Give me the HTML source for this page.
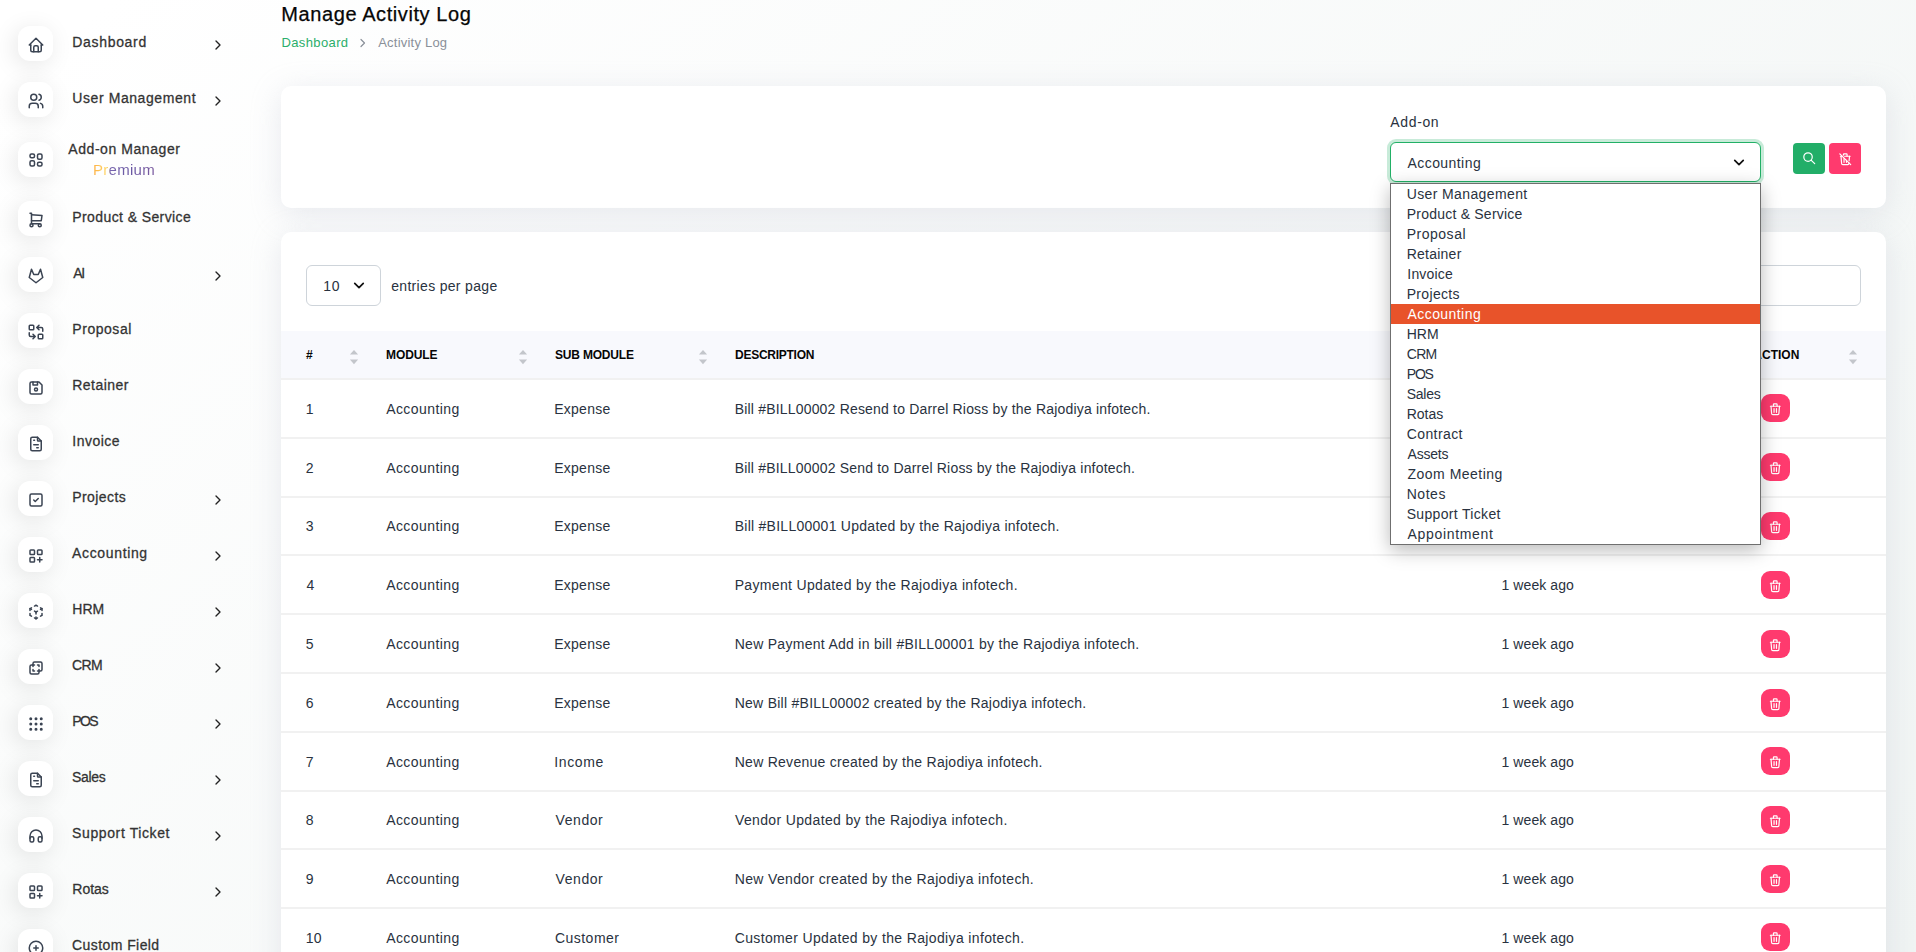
<!DOCTYPE html>
<html lang="en"><head><meta charset="utf-8"><title>Manage Activity Log</title>
<style>
*{box-sizing:border-box;margin:0;padding:0}
html,body{width:1916px;height:952px;overflow:hidden}
body{font-family:"Liberation Sans",sans-serif;color:#293240;position:relative;
background:linear-gradient(141.55deg,rgba(240,244,243,0) 3.46%,#f0f4f3 99.86%),#fff;}
.t{position:absolute;white-space:nowrap;display:block}
.ic{position:absolute;display:block}
.abs{position:absolute}
.micon{position:absolute;left:18px;width:35px;height:35px;border-radius:12px;background:#fff;box-shadow:-3px 4px 23px rgba(0,0,0,.1)}
.card{position:absolute;background:#fff;border-radius:10px;box-shadow:0 6px 30px rgba(182,186,203,.3)}
.rowline{position:absolute;left:281px;width:1605px;height:2px;background:#f1f1f1}
.delbtn{position:absolute;left:1761.3px;width:28.6px;height:28px;border-radius:9px;background:#ff3a6e}
.opt{position:absolute;left:1391px;width:368.7px;height:20px}
</style></head><body>
<nav>
<div class="micon" style="top:26.0px"></div>
<svg class="ic" style="left:26.6px;top:35.6px;" width="18" height="18" viewBox="0 0 24 24" fill="none" stroke="#3b4453" stroke-width="2" stroke-linecap="round" stroke-linejoin="round"><path d="M5 12l-2 0l9 -9l9 9l-2 0"/><path d="M5 12v7a2 2 0 0 0 2 2h10a2 2 0 0 0 2 -2v-7"/><path d="M9 21v-6a2 2 0 0 1 2 -2h2a2 2 0 0 1 2 2v6"/></svg>
<span id="t1" class="t " style="left:72.30px;top:34px;font-size:14px;line-height:17px;color:#333;letter-spacing:0.674px;-webkit-text-stroke:.28px #333;">Dashboard</span>
<svg class="ic" style="left:209.85px;top:36.95px" width="16" height="16" viewBox="0 0 24 24" fill="none" stroke="#222" stroke-width="2" stroke-linecap="round" stroke-linejoin="round"><path d="M9 18l6 -6l-6 -6"/></svg>
<div class="micon" style="top:82.0px"></div>
<svg class="ic" style="left:26.6px;top:91.6px;" width="18" height="18" viewBox="0 0 24 24" fill="none" stroke="#3b4453" stroke-width="2" stroke-linecap="round" stroke-linejoin="round"><path d="M9 7m-4 0a4 4 0 1 0 8 0a4 4 0 1 0 -8 0"/><path d="M3 21v-2a4 4 0 0 1 4 -4h4a4 4 0 0 1 4 4v2"/><path d="M16 3.13a4 4 0 0 1 0 7.75"/><path d="M21 21v-2a4 4 0 0 0 -3 -3.85"/></svg>
<span id="t2" class="t " style="left:72.30px;top:90px;font-size:14px;line-height:17px;color:#333;letter-spacing:0.579px;-webkit-text-stroke:.28px #333;">User Management</span>
<svg class="ic" style="left:209.85px;top:92.95px" width="16" height="16" viewBox="0 0 24 24" fill="none" stroke="#222" stroke-width="2" stroke-linecap="round" stroke-linejoin="round"><path d="M9 18l6 -6l-6 -6"/></svg>
<div class="micon" style="top:142.0px"></div>
<svg class="ic" style="left:26.6px;top:151.0px;" width="18" height="18" viewBox="0 0 24 24" fill="none" stroke="#3b4453" stroke-width="2" stroke-linecap="round" stroke-linejoin="round"><path d="M4 4m0 2a2 2 0 0 1 2 -2h2a2 2 0 0 1 2 2v1a2 2 0 0 1 -2 2h-2a2 2 0 0 1 -2 -2z"/><path d="M4 13m0 2a2 2 0 0 1 2 -2h2a2 2 0 0 1 2 2v3a2 2 0 0 1 -2 2h-2a2 2 0 0 1 -2 -2z"/><path d="M14 4m0 2a2 2 0 0 1 2 -2h2a2 2 0 0 1 2 2v3a2 2 0 0 1 -2 2h-2a2 2 0 0 1 -2 -2z"/><path d="M14 15m0 2a2 2 0 0 1 2 -2h2a2 2 0 0 1 2 2v1a2 2 0 0 1 -2 2h-2a2 2 0 0 1 -2 -2z"/></svg>
<span id="t3" class="t " style="left:68.30px;top:141px;font-size:14px;line-height:17px;color:#333;letter-spacing:0.562px;-webkit-text-stroke:.28px #333;">Add-on Manager</span>
<span id="t4" class="t " style="left:92.90px;top:161px;font-size:15px;line-height:18px;color:#7b6bb0;letter-spacing:0.300px;background:linear-gradient(90deg,#fdb044 0%,#ffd868 23%,#7765ad 28%,#6b59a4 60%,#7a5a9f 100%);-webkit-background-clip:text;background-clip:text;color:transparent;">Premium</span>
<div class="micon" style="top:201.0px"></div>
<svg class="ic" style="left:26.6px;top:210.6px;" width="18" height="18" viewBox="0 0 24 24" fill="none" stroke="#3b4453" stroke-width="2" stroke-linecap="round" stroke-linejoin="round"><path d="M6 19m-2 0a2 2 0 1 0 4 0a2 2 0 1 0 -4 0"/><path d="M17 19m-2 0a2 2 0 1 0 4 0a2 2 0 1 0 -4 0"/><path d="M17 17h-11v-14h-2"/><path d="M6 5l14 1l-1 7h-13"/></svg>
<span id="t5" class="t " style="left:72.30px;top:209px;font-size:14px;line-height:17px;color:#333;letter-spacing:0.399px;-webkit-text-stroke:.28px #333;">Product &amp; Service</span>
<div class="micon" style="top:257.0px"></div>
<svg class="ic" style="left:26.6px;top:266.6px;" width="18" height="18" viewBox="0 0 24 24" fill="none" stroke="#3b4453" stroke-width="2" stroke-linecap="round" stroke-linejoin="round"><path d="M21 14l-9 7l-9 -7l3 -11l3 7h6l3 -7z"/></svg>
<span id="t6" class="t " style="left:73.30px;top:265px;font-size:14px;line-height:17px;color:#333;letter-spacing:-1.400px;-webkit-text-stroke:.28px #333;">AI</span>
<svg class="ic" style="left:209.85px;top:267.95px" width="16" height="16" viewBox="0 0 24 24" fill="none" stroke="#222" stroke-width="2" stroke-linecap="round" stroke-linejoin="round"><path d="M9 18l6 -6l-6 -6"/></svg>
<div class="micon" style="top:313.0px"></div>
<svg class="ic" style="left:26.6px;top:322.6px;" width="18" height="18" viewBox="0 0 24 24" fill="none" stroke="#3b4453" stroke-width="2" stroke-linecap="round" stroke-linejoin="round"><path d="M3 3m0 1a1 1 0 0 1 1 -1h4a1 1 0 0 1 1 1v4a1 1 0 0 1 -1 1h-4a1 1 0 0 1 -1 -1z"/><path d="M15 15m0 1a1 1 0 0 1 1 -1h4a1 1 0 0 1 1 1v4a1 1 0 0 1 -1 1h-4a1 1 0 0 1 -1 -1z"/><path d="M21 11v-3a2 2 0 0 0 -2 -2h-6l3 3m0 -6l-3 3"/><path d="M3 13v3a2 2 0 0 0 2 2h6l-3 -3m0 6l3 -3"/></svg>
<span id="t7" class="t " style="left:72.30px;top:321px;font-size:14px;line-height:17px;color:#333;letter-spacing:0.543px;-webkit-text-stroke:.28px #333;">Proposal</span>
<div class="micon" style="top:369.0px"></div>
<svg class="ic" style="left:26.6px;top:378.6px;" width="18" height="18" viewBox="0 0 24 24" fill="none" stroke="#3b4453" stroke-width="2" stroke-linecap="round" stroke-linejoin="round"><path d="M6 4h10l4 4v10a2 2 0 0 1 -2 2h-12a2 2 0 0 1 -2 -2v-12a2 2 0 0 1 2 -2"/><path d="M12 14m-2 0a2 2 0 1 0 4 0a2 2 0 1 0 -4 0"/><path d="M14 4l0 4l-6 0l0 -4"/></svg>
<span id="t8" class="t " style="left:72.30px;top:377px;font-size:14px;line-height:17px;color:#333;letter-spacing:0.443px;-webkit-text-stroke:.28px #333;">Retainer</span>
<div class="micon" style="top:425.0px"></div>
<svg class="ic" style="left:26.6px;top:434.6px;" width="18" height="18" viewBox="0 0 24 24" fill="none" stroke="#3b4453" stroke-width="2" stroke-linecap="round" stroke-linejoin="round"><path d="M14 3v4a1 1 0 0 0 1 1h4"/><path d="M17 21h-10a2 2 0 0 1 -2 -2v-14a2 2 0 0 1 2 -2h7l5 5v11a2 2 0 0 1 -2 2z"/><path d="M9 7l1 0"/><path d="M9 13l6 0"/><path d="M13 17l2 0"/></svg>
<span id="t9" class="t " style="left:72.30px;top:433px;font-size:14px;line-height:17px;color:#333;letter-spacing:0.500px;-webkit-text-stroke:.28px #333;">Invoice</span>
<div class="micon" style="top:481.0px"></div>
<svg class="ic" style="left:26.6px;top:490.6px;" width="18" height="18" viewBox="0 0 24 24" fill="none" stroke="#3b4453" stroke-width="2" stroke-linecap="round" stroke-linejoin="round"><path d="M4 4m0 2a2 2 0 0 1 2 -2h12a2 2 0 0 1 2 2v12a2 2 0 0 1 -2 2h-12a2 2 0 0 1 -2 -2z"/><path d="M9 12l2 2l4 -4"/></svg>
<span id="t10" class="t " style="left:72.30px;top:489px;font-size:14px;line-height:17px;color:#333;letter-spacing:0.400px;-webkit-text-stroke:.28px #333;">Projects</span>
<svg class="ic" style="left:209.85px;top:491.95px" width="16" height="16" viewBox="0 0 24 24" fill="none" stroke="#222" stroke-width="2" stroke-linecap="round" stroke-linejoin="round"><path d="M9 18l6 -6l-6 -6"/></svg>
<div class="micon" style="top:537.0px"></div>
<svg class="ic" style="left:26.6px;top:546.6px;" width="18" height="18" viewBox="0 0 24 24" fill="none" stroke="#3b4453" stroke-width="2" stroke-linecap="round" stroke-linejoin="round"><path d="M4 4m0 1a1 1 0 0 1 1 -1h4a1 1 0 0 1 1 1v4a1 1 0 0 1 -1 1h-4a1 1 0 0 1 -1 -1z"/><path d="M14 4m0 1a1 1 0 0 1 1 -1h4a1 1 0 0 1 1 1v4a1 1 0 0 1 -1 1h-4a1 1 0 0 1 -1 -1z"/><path d="M4 14m0 1a1 1 0 0 1 1 -1h4a1 1 0 0 1 1 1v4a1 1 0 0 1 -1 1h-4a1 1 0 0 1 -1 -1z"/><path d="M14 17h6m-3 -3v6"/></svg>
<span id="t11" class="t " style="left:72.10px;top:545px;font-size:14px;line-height:17px;color:#333;letter-spacing:0.644px;-webkit-text-stroke:.28px #333;">Accounting</span>
<svg class="ic" style="left:209.85px;top:547.95px" width="16" height="16" viewBox="0 0 24 24" fill="none" stroke="#222" stroke-width="2" stroke-linecap="round" stroke-linejoin="round"><path d="M9 18l6 -6l-6 -6"/></svg>
<div class="micon" style="top:593.0px"></div>
<svg class="ic" style="left:26.6px;top:602.6px;" width="18" height="18" viewBox="0 0 24 24" fill="none" stroke="#3b4453" stroke-width="2" stroke-linecap="round" stroke-linejoin="round"><path d="M6 17.6l-2 -1.1v-2.5"/><path d="M4 10v-2.5l2 -1.1"/><path d="M10 4.1l2 -1.1l2 1.1"/><path d="M18 6.4l2 1.1v2.5"/><path d="M20 14v2.5l-2 1.12"/><path d="M14 19.9l-2 1.1l-2 -1.1"/><path d="M12 12l2 -1.1"/><path d="M18 8.6l2 -1.1"/><path d="M12 12l0 2.5"/><path d="M12 18.5l0 2.5"/><path d="M12 12l-2 -1.12"/><path d="M6 8.6l-2 -1.1"/></svg>
<span id="t12" class="t " style="left:72.30px;top:601px;font-size:14px;line-height:17px;color:#333;-webkit-text-stroke:.28px #333;">HRM</span>
<svg class="ic" style="left:209.85px;top:603.95px" width="16" height="16" viewBox="0 0 24 24" fill="none" stroke="#222" stroke-width="2" stroke-linecap="round" stroke-linejoin="round"><path d="M9 18l6 -6l-6 -6"/></svg>
<div class="micon" style="top:649.0px"></div>
<svg class="ic" style="left:26.6px;top:658.6px;" width="18" height="18" viewBox="0 0 24 24" fill="none" stroke="#3b4453" stroke-width="2" stroke-linecap="round" stroke-linejoin="round"><path d="M16 16v2a2 2 0 0 1 -2 2h-8a2 2 0 0 1 -2 -2v-8a2 2 0 0 1 2 -2h2v-2a2 2 0 0 1 2 -2h8a2 2 0 0 1 2 2v8a2 2 0 0 1 -2 2h-2"/><path d="M10 8l-2 0l0 2"/><path d="M8 14l0 2l2 0"/><path d="M14 8l2 0l0 2"/><path d="M16 14l0 2l-2 0"/></svg>
<span id="t13" class="t " style="left:72.10px;top:657px;font-size:14px;line-height:17px;color:#333;letter-spacing:-0.700px;-webkit-text-stroke:.28px #333;">CRM</span>
<svg class="ic" style="left:209.85px;top:659.95px" width="16" height="16" viewBox="0 0 24 24" fill="none" stroke="#222" stroke-width="2" stroke-linecap="round" stroke-linejoin="round"><path d="M9 18l6 -6l-6 -6"/></svg>
<div class="micon" style="top:705.0px"></div>
<svg class="ic" style="left:26.6px;top:714.6px;" width="18" height="18" viewBox="0 0 24 24" fill="none" stroke="#3b4453" stroke-width="2" stroke-linecap="round" stroke-linejoin="round"><path d="M5 5m-1 0a1 1 0 1 0 2 0a1 1 0 1 0 -2 0"/><path d="M12 5m-1 0a1 1 0 1 0 2 0a1 1 0 1 0 -2 0"/><path d="M19 5m-1 0a1 1 0 1 0 2 0a1 1 0 1 0 -2 0"/><path d="M5 12m-1 0a1 1 0 1 0 2 0a1 1 0 1 0 -2 0"/><path d="M12 12m-1 0a1 1 0 1 0 2 0a1 1 0 1 0 -2 0"/><path d="M19 12m-1 0a1 1 0 1 0 2 0a1 1 0 1 0 -2 0"/><path d="M5 19m-1 0a1 1 0 1 0 2 0a1 1 0 1 0 -2 0"/><path d="M12 19m-1 0a1 1 0 1 0 2 0a1 1 0 1 0 -2 0"/><path d="M19 19m-1 0a1 1 0 1 0 2 0a1 1 0 1 0 -2 0"/></svg>
<span id="t14" class="t " style="left:72.30px;top:713px;font-size:14px;line-height:17px;color:#333;letter-spacing:-1.600px;-webkit-text-stroke:.28px #333;">POS</span>
<svg class="ic" style="left:209.85px;top:715.95px" width="16" height="16" viewBox="0 0 24 24" fill="none" stroke="#222" stroke-width="2" stroke-linecap="round" stroke-linejoin="round"><path d="M9 18l6 -6l-6 -6"/></svg>
<div class="micon" style="top:761.0px"></div>
<svg class="ic" style="left:26.6px;top:770.6px;" width="18" height="18" viewBox="0 0 24 24" fill="none" stroke="#3b4453" stroke-width="2" stroke-linecap="round" stroke-linejoin="round"><path d="M14 3v4a1 1 0 0 0 1 1h4"/><path d="M17 21h-10a2 2 0 0 1 -2 -2v-14a2 2 0 0 1 2 -2h7l5 5v11a2 2 0 0 1 -2 2z"/><path d="M9 7l1 0"/><path d="M9 13l6 0"/><path d="M13 17l2 0"/></svg>
<span id="t15" class="t " style="left:72.10px;top:769px;font-size:14px;line-height:17px;color:#333;letter-spacing:-0.350px;-webkit-text-stroke:.28px #333;">Sales</span>
<svg class="ic" style="left:209.85px;top:771.95px" width="16" height="16" viewBox="0 0 24 24" fill="none" stroke="#222" stroke-width="2" stroke-linecap="round" stroke-linejoin="round"><path d="M9 18l6 -6l-6 -6"/></svg>
<div class="micon" style="top:817.0px"></div>
<svg class="ic" style="left:26.6px;top:826.6px;" width="18" height="18" viewBox="0 0 24 24" fill="none" stroke="#3b4453" stroke-width="2" stroke-linecap="round" stroke-linejoin="round"><path d="M4 13m0 2a2 2 0 0 1 2 -2h1a2 2 0 0 1 2 2v3a2 2 0 0 1 -2 2h-1a2 2 0 0 1 -2 -2z"/><path d="M15 13m0 2a2 2 0 0 1 2 -2h1a2 2 0 0 1 2 2v3a2 2 0 0 1 -2 2h-1a2 2 0 0 1 -2 -2z"/><path d="M4 15v-3a8 8 0 0 1 16 0v3"/></svg>
<span id="t16" class="t " style="left:72.10px;top:825px;font-size:14px;line-height:17px;color:#333;letter-spacing:0.608px;-webkit-text-stroke:.28px #333;">Support Ticket</span>
<svg class="ic" style="left:209.85px;top:827.95px" width="16" height="16" viewBox="0 0 24 24" fill="none" stroke="#222" stroke-width="2" stroke-linecap="round" stroke-linejoin="round"><path d="M9 18l6 -6l-6 -6"/></svg>
<div class="micon" style="top:873.0px"></div>
<svg class="ic" style="left:26.6px;top:882.6px;" width="18" height="18" viewBox="0 0 24 24" fill="none" stroke="#3b4453" stroke-width="2" stroke-linecap="round" stroke-linejoin="round"><path d="M4 4m0 1a1 1 0 0 1 1 -1h4a1 1 0 0 1 1 1v4a1 1 0 0 1 -1 1h-4a1 1 0 0 1 -1 -1z"/><path d="M14 4m0 1a1 1 0 0 1 1 -1h4a1 1 0 0 1 1 1v4a1 1 0 0 1 -1 1h-4a1 1 0 0 1 -1 -1z"/><path d="M4 14m0 1a1 1 0 0 1 1 -1h4a1 1 0 0 1 1 1v4a1 1 0 0 1 -1 1h-4a1 1 0 0 1 -1 -1z"/><path d="M14 17h6m-3 -3v6"/></svg>
<span id="t17" class="t " style="left:72.30px;top:881px;font-size:14px;line-height:17px;color:#333;-webkit-text-stroke:.28px #333;">Rotas</span>
<svg class="ic" style="left:209.85px;top:883.95px" width="16" height="16" viewBox="0 0 24 24" fill="none" stroke="#222" stroke-width="2" stroke-linecap="round" stroke-linejoin="round"><path d="M9 18l6 -6l-6 -6"/></svg>
<div class="micon" style="top:929.0px"></div>
<svg class="ic" style="left:26.6px;top:938.6px;" width="18" height="18" viewBox="0 0 24 24" fill="none" stroke="#3b4453" stroke-width="2" stroke-linecap="round" stroke-linejoin="round"><path d="M3 12a9 9 0 1 0 18 0a9 9 0 0 0 -18 0"/><path d="M9 12h6"/><path d="M12 9v6"/></svg>
<span id="t18" class="t " style="left:72.10px;top:937px;font-size:14px;line-height:17px;color:#333;letter-spacing:0.418px;-webkit-text-stroke:.28px #333;">Custom Field</span>
</nav>
<main>
<span id="t19" class="t " style="left:281.30px;top:2px;font-size:20px;line-height:24px;color:#060606;letter-spacing:0.589px;-webkit-text-stroke:.25px #060606;">Manage Activity Log</span>
<span id="t20" class="t " style="left:281.50px;top:35px;font-size:13px;line-height:16px;color:#2bae6a;letter-spacing:0.375px;">Dashboard</span>
<svg class="ic" style="left:357px;top:36.5px" width="12" height="12" viewBox="0 0 12 12" fill="none" stroke="#8a9099" stroke-width="1.2" stroke-linecap="round" stroke-linejoin="round"><path d="M4 2.5l3.5 3.5l-3.5 3.5"/></svg>
<span id="t21" class="t " style="left:378.20px;top:35px;font-size:13px;line-height:16px;color:#8a9099;letter-spacing:0.219px;">Activity Log</span>
<div class="card" style="left:281px;top:86px;width:1605px;height:122px"></div>
<span id="t22" class="t " style="left:1390.30px;top:114px;font-size:14px;line-height:17px;letter-spacing:0.640px;">Add-on</span>
<div class="abs" style="left:1390px;top:141.6px;width:370.7px;height:40.9px;border:1px solid #22b066;border-radius:6px;background:#fff;box-shadow:0 0 0 3px rgba(34,176,102,.25)"></div>
<span id="t23" class="t " style="left:1407.50px;top:155px;font-size:14px;line-height:17px;letter-spacing:0.433px;">Accounting</span>
<svg class="ic" style="left:1731px;top:155px" width="16" height="16" viewBox="0 0 16 16" fill="none" stroke="#111" stroke-width="1.7" stroke-linecap="round" stroke-linejoin="round"><path d="M3.75 5.3l4.25 4.4l4.25 -4.4"/></svg>
<div class="abs" style="left:1793px;top:143px;width:32px;height:31px;border-radius:4px;background:#22ae68"></div>
<svg class="ic" style="left:1801.8px;top:151.4px;" width="14.5" height="14.5" viewBox="0 0 24 24" fill="none" stroke="#fff" stroke-width="2" stroke-linecap="round" stroke-linejoin="round"><path d="M10 10m-7 0a7 7 0 1 0 14 0a7 7 0 1 0 -14 0"/><path d="M21 21l-6 -6"/></svg>
<div class="abs" style="left:1829px;top:143px;width:32px;height:31px;border-radius:4px;background:#ff3a6e"></div>
<svg class="ic" style="left:1837.8px;top:151.7px;" width="14.5" height="14.5" viewBox="0 0 24 24" fill="none" stroke="#fff" stroke-width="2" stroke-linecap="round" stroke-linejoin="round"><path d="M3 3l18 18"/><path d="M4 7h3m4 0h9"/><path d="M10 11l0 6"/><path d="M14 14l0 3"/><path d="M5 7l1 12a2 2 0 0 0 2 2h8a2 2 0 0 0 2 -2l.077 -.923"/><path d="M18.384 14.373l.616 -7.373"/><path d="M9 5v-1a1 1 0 0 1 1 -1h4a1 1 0 0 1 1 1v3"/></svg>
<div class="card" style="left:281px;top:232px;width:1605px;height:760px"></div>
<div class="abs" style="left:306px;top:265px;width:74.5px;height:40.5px;border:1px solid #ced4da;border-radius:6px;background:#fff"></div>
<span id="t24" class="t " style="left:323.30px;top:278px;font-size:14px;line-height:17px;letter-spacing:0.600px;">10</span>
<svg class="ic" style="left:351px;top:277.5px" width="16" height="16" viewBox="0 0 16 16" fill="none" stroke="#111" stroke-width="1.7" stroke-linecap="round" stroke-linejoin="round"><path d="M3.75 5.3l4.25 4.4l4.25 -4.4"/></svg>
<span id="t25" class="t " style="left:391.20px;top:278px;font-size:14px;line-height:17px;letter-spacing:0.320px;">entries per page</span>
<div class="abs" style="left:1561px;top:265px;width:300px;height:40.5px;border:1px solid #ced4da;border-radius:6px;background:#fff"></div>
<div class="abs" style="left:281px;top:331px;width:1605px;height:47px;background:#f8f9fd"></div>
<span id="t26" class="t " style="left:306.00px;top:348px;font-size:12px;line-height:14px;font-weight:700;color:#060606;">#</span>
<span id="t27" class="t " style="left:386.00px;top:348px;font-size:12px;line-height:14px;font-weight:700;color:#060606;letter-spacing:-0.080px;">MODULE</span>
<span id="t28" class="t " style="left:555.00px;top:348px;font-size:12px;line-height:14px;font-weight:700;color:#060606;letter-spacing:-0.189px;">SUB MODULE</span>
<span id="t29" class="t " style="left:735.00px;top:348px;font-size:12px;line-height:14px;font-weight:700;color:#060606;letter-spacing:-0.260px;">DESCRIPTION</span>
<span id="t30" class="t " style="left:1753.30px;top:348px;font-size:12px;line-height:14px;font-weight:700;color:#060606;">ACTION</span>
<svg class="ic" style="left:349.1px;top:349px" width="10" height="16" viewBox="0 0 10 16"><path d="M5 1.1l4.1 4.5h-8.2z" fill="#c3c6cb"/><path d="M5 15.2l4.1 -4.8h-8.2z" fill="#c3c6cb"/></svg>
<svg class="ic" style="left:517.8px;top:349px" width="10" height="16" viewBox="0 0 10 16"><path d="M5 1.1l4.1 4.5h-8.2z" fill="#c3c6cb"/><path d="M5 15.2l4.1 -4.8h-8.2z" fill="#c3c6cb"/></svg>
<svg class="ic" style="left:697.9px;top:349px" width="10" height="16" viewBox="0 0 10 16"><path d="M5 1.1l4.1 4.5h-8.2z" fill="#c3c6cb"/><path d="M5 15.2l4.1 -4.8h-8.2z" fill="#c3c6cb"/></svg>
<svg class="ic" style="left:1847.9px;top:349px" width="10" height="16" viewBox="0 0 10 16"><path d="M5 1.1l4.1 4.5h-8.2z" fill="#c3c6cb"/><path d="M5 15.2l4.1 -4.8h-8.2z" fill="#c3c6cb"/></svg>
<div class="rowline" style="top:378px"></div>
<span id="t31" class="t " style="left:305.70px;top:401px;font-size:14px;line-height:17px;">1</span>
<span id="t32" class="t " style="left:386.20px;top:401px;font-size:14px;line-height:17px;letter-spacing:0.422px;">Accounting</span>
<span id="t33" class="t " style="left:554.20px;top:401px;font-size:14px;line-height:17px;letter-spacing:0.266px;">Expense</span>
<span id="t34" class="t " style="left:734.70px;top:401px;font-size:14px;line-height:17px;letter-spacing:0.187px;">Bill #BILL00002 Resend to Darrel Rioss by the Rajodiya infotech.</span>
<span id="t35" class="t " style="left:1501.50px;top:401px;font-size:14px;line-height:17px;letter-spacing:0.089px;">1 week ago</span>
<div class="delbtn" style="top:394px"></div>
<svg class="ic" style="left:1768.2px;top:402.1px;" width="14.5" height="14.5" viewBox="0 0 24 24" fill="none" stroke="#fff" stroke-width="2" stroke-linecap="round" stroke-linejoin="round"><path d="M4 7l16 0"/><path d="M10 11l0 6"/><path d="M14 11l0 6"/><path d="M5 7l1 12a2 2 0 0 0 2 2h8a2 2 0 0 0 2 -2l1 -12"/><path d="M9 7v-3a1 1 0 0 1 1 -1h4a1 1 0 0 1 1 1v3"/></svg>
<div class="rowline" style="top:437px"></div>
<span id="t36" class="t " style="left:305.70px;top:460px;font-size:14px;line-height:17px;">2</span>
<span id="t37" class="t " style="left:386.20px;top:460px;font-size:14px;line-height:17px;letter-spacing:0.422px;">Accounting</span>
<span id="t38" class="t " style="left:554.20px;top:460px;font-size:14px;line-height:17px;letter-spacing:0.266px;">Expense</span>
<span id="t39" class="t " style="left:734.70px;top:460px;font-size:14px;line-height:17px;letter-spacing:0.193px;">Bill #BILL00002 Send to Darrel Rioss by the Rajodiya infotech.</span>
<span id="t40" class="t " style="left:1501.50px;top:460px;font-size:14px;line-height:17px;letter-spacing:0.089px;">1 week ago</span>
<div class="delbtn" style="top:453px"></div>
<svg class="ic" style="left:1768.2px;top:461.1px;" width="14.5" height="14.5" viewBox="0 0 24 24" fill="none" stroke="#fff" stroke-width="2" stroke-linecap="round" stroke-linejoin="round"><path d="M4 7l16 0"/><path d="M10 11l0 6"/><path d="M14 11l0 6"/><path d="M5 7l1 12a2 2 0 0 0 2 2h8a2 2 0 0 0 2 -2l1 -12"/><path d="M9 7v-3a1 1 0 0 1 1 -1h4a1 1 0 0 1 1 1v3"/></svg>
<div class="rowline" style="top:496px"></div>
<span id="t41" class="t " style="left:305.70px;top:518px;font-size:14px;line-height:17px;">3</span>
<span id="t42" class="t " style="left:386.20px;top:518px;font-size:14px;line-height:17px;letter-spacing:0.422px;">Accounting</span>
<span id="t43" class="t " style="left:554.20px;top:518px;font-size:14px;line-height:17px;letter-spacing:0.266px;">Expense</span>
<span id="t44" class="t " style="left:734.70px;top:518px;font-size:14px;line-height:17px;letter-spacing:0.263px;">Bill #BILL00001 Updated by the Rajodiya infotech.</span>
<span id="t45" class="t " style="left:1501.50px;top:518px;font-size:14px;line-height:17px;letter-spacing:0.089px;">1 week ago</span>
<div class="delbtn" style="top:512px"></div>
<svg class="ic" style="left:1768.2px;top:520.1px;" width="14.5" height="14.5" viewBox="0 0 24 24" fill="none" stroke="#fff" stroke-width="2" stroke-linecap="round" stroke-linejoin="round"><path d="M4 7l16 0"/><path d="M10 11l0 6"/><path d="M14 11l0 6"/><path d="M5 7l1 12a2 2 0 0 0 2 2h8a2 2 0 0 0 2 -2l1 -12"/><path d="M9 7v-3a1 1 0 0 1 1 -1h4a1 1 0 0 1 1 1v3"/></svg>
<div class="rowline" style="top:554px"></div>
<span id="t46" class="t " style="left:306.50px;top:577px;font-size:14px;line-height:17px;">4</span>
<span id="t47" class="t " style="left:386.20px;top:577px;font-size:14px;line-height:17px;letter-spacing:0.422px;">Accounting</span>
<span id="t48" class="t " style="left:554.20px;top:577px;font-size:14px;line-height:17px;letter-spacing:0.266px;">Expense</span>
<span id="t49" class="t " style="left:734.70px;top:577px;font-size:14px;line-height:17px;letter-spacing:0.340px;">Payment Updated by the Rajodiya infotech.</span>
<span id="t50" class="t " style="left:1501.50px;top:577px;font-size:14px;line-height:17px;letter-spacing:0.089px;">1 week ago</span>
<div class="delbtn" style="top:571px"></div>
<svg class="ic" style="left:1768.2px;top:579.1px;" width="14.5" height="14.5" viewBox="0 0 24 24" fill="none" stroke="#fff" stroke-width="2" stroke-linecap="round" stroke-linejoin="round"><path d="M4 7l16 0"/><path d="M10 11l0 6"/><path d="M14 11l0 6"/><path d="M5 7l1 12a2 2 0 0 0 2 2h8a2 2 0 0 0 2 -2l1 -12"/><path d="M9 7v-3a1 1 0 0 1 1 -1h4a1 1 0 0 1 1 1v3"/></svg>
<div class="rowline" style="top:613px"></div>
<span id="t51" class="t " style="left:305.70px;top:636px;font-size:14px;line-height:17px;">5</span>
<span id="t52" class="t " style="left:386.20px;top:636px;font-size:14px;line-height:17px;letter-spacing:0.422px;">Accounting</span>
<span id="t53" class="t " style="left:554.20px;top:636px;font-size:14px;line-height:17px;letter-spacing:0.266px;">Expense</span>
<span id="t54" class="t " style="left:734.70px;top:636px;font-size:14px;line-height:17px;letter-spacing:0.286px;">New Payment Add in bill #BILL00001 by the Rajodiya infotech.</span>
<span id="t55" class="t " style="left:1501.50px;top:636px;font-size:14px;line-height:17px;letter-spacing:0.089px;">1 week ago</span>
<div class="delbtn" style="top:630px"></div>
<svg class="ic" style="left:1768.2px;top:638.1px;" width="14.5" height="14.5" viewBox="0 0 24 24" fill="none" stroke="#fff" stroke-width="2" stroke-linecap="round" stroke-linejoin="round"><path d="M4 7l16 0"/><path d="M10 11l0 6"/><path d="M14 11l0 6"/><path d="M5 7l1 12a2 2 0 0 0 2 2h8a2 2 0 0 0 2 -2l1 -12"/><path d="M9 7v-3a1 1 0 0 1 1 -1h4a1 1 0 0 1 1 1v3"/></svg>
<div class="rowline" style="top:672px"></div>
<span id="t56" class="t " style="left:305.70px;top:695px;font-size:14px;line-height:17px;">6</span>
<span id="t57" class="t " style="left:386.20px;top:695px;font-size:14px;line-height:17px;letter-spacing:0.422px;">Accounting</span>
<span id="t58" class="t " style="left:554.20px;top:695px;font-size:14px;line-height:17px;letter-spacing:0.266px;">Expense</span>
<span id="t59" class="t " style="left:734.70px;top:695px;font-size:14px;line-height:17px;letter-spacing:0.265px;">New Bill #BILL00002 created by the Rajodiya infotech.</span>
<span id="t60" class="t " style="left:1501.50px;top:695px;font-size:14px;line-height:17px;letter-spacing:0.089px;">1 week ago</span>
<div class="delbtn" style="top:689px"></div>
<svg class="ic" style="left:1768.2px;top:697.1px;" width="14.5" height="14.5" viewBox="0 0 24 24" fill="none" stroke="#fff" stroke-width="2" stroke-linecap="round" stroke-linejoin="round"><path d="M4 7l16 0"/><path d="M10 11l0 6"/><path d="M14 11l0 6"/><path d="M5 7l1 12a2 2 0 0 0 2 2h8a2 2 0 0 0 2 -2l1 -12"/><path d="M9 7v-3a1 1 0 0 1 1 -1h4a1 1 0 0 1 1 1v3"/></svg>
<div class="rowline" style="top:731px"></div>
<span id="t61" class="t " style="left:305.70px;top:754px;font-size:14px;line-height:17px;">7</span>
<span id="t62" class="t " style="left:386.20px;top:754px;font-size:14px;line-height:17px;letter-spacing:0.422px;">Accounting</span>
<span id="t63" class="t " style="left:554.20px;top:754px;font-size:14px;line-height:17px;letter-spacing:0.640px;">Income</span>
<span id="t64" class="t " style="left:734.70px;top:754px;font-size:14px;line-height:17px;letter-spacing:0.273px;">New Revenue created by the Rajodiya infotech.</span>
<span id="t65" class="t " style="left:1501.50px;top:754px;font-size:14px;line-height:17px;letter-spacing:0.089px;">1 week ago</span>
<div class="delbtn" style="top:747px"></div>
<svg class="ic" style="left:1768.2px;top:755.1px;" width="14.5" height="14.5" viewBox="0 0 24 24" fill="none" stroke="#fff" stroke-width="2" stroke-linecap="round" stroke-linejoin="round"><path d="M4 7l16 0"/><path d="M10 11l0 6"/><path d="M14 11l0 6"/><path d="M5 7l1 12a2 2 0 0 0 2 2h8a2 2 0 0 0 2 -2l1 -12"/><path d="M9 7v-3a1 1 0 0 1 1 -1h4a1 1 0 0 1 1 1v3"/></svg>
<div class="rowline" style="top:790px"></div>
<span id="t66" class="t " style="left:305.70px;top:812px;font-size:14px;line-height:17px;">8</span>
<span id="t67" class="t " style="left:386.20px;top:812px;font-size:14px;line-height:17px;letter-spacing:0.422px;">Accounting</span>
<span id="t68" class="t " style="left:555.60px;top:812px;font-size:14px;line-height:17px;letter-spacing:0.560px;">Vendor</span>
<span id="t69" class="t " style="left:735.00px;top:812px;font-size:14px;line-height:17px;letter-spacing:0.356px;">Vendor Updated by the Rajodiya infotech.</span>
<span id="t70" class="t " style="left:1501.50px;top:812px;font-size:14px;line-height:17px;letter-spacing:0.089px;">1 week ago</span>
<div class="delbtn" style="top:806px"></div>
<svg class="ic" style="left:1768.2px;top:814.1px;" width="14.5" height="14.5" viewBox="0 0 24 24" fill="none" stroke="#fff" stroke-width="2" stroke-linecap="round" stroke-linejoin="round"><path d="M4 7l16 0"/><path d="M10 11l0 6"/><path d="M14 11l0 6"/><path d="M5 7l1 12a2 2 0 0 0 2 2h8a2 2 0 0 0 2 -2l1 -12"/><path d="M9 7v-3a1 1 0 0 1 1 -1h4a1 1 0 0 1 1 1v3"/></svg>
<div class="rowline" style="top:848px"></div>
<span id="t71" class="t " style="left:305.70px;top:871px;font-size:14px;line-height:17px;">9</span>
<span id="t72" class="t " style="left:386.20px;top:871px;font-size:14px;line-height:17px;letter-spacing:0.422px;">Accounting</span>
<span id="t73" class="t " style="left:555.60px;top:871px;font-size:14px;line-height:17px;letter-spacing:0.560px;">Vendor</span>
<span id="t74" class="t " style="left:734.70px;top:871px;font-size:14px;line-height:17px;letter-spacing:0.349px;">New Vendor created by the Rajodiya infotech.</span>
<span id="t75" class="t " style="left:1501.50px;top:871px;font-size:14px;line-height:17px;letter-spacing:0.089px;">1 week ago</span>
<div class="delbtn" style="top:865px"></div>
<svg class="ic" style="left:1768.2px;top:873.1px;" width="14.5" height="14.5" viewBox="0 0 24 24" fill="none" stroke="#fff" stroke-width="2" stroke-linecap="round" stroke-linejoin="round"><path d="M4 7l16 0"/><path d="M10 11l0 6"/><path d="M14 11l0 6"/><path d="M5 7l1 12a2 2 0 0 0 2 2h8a2 2 0 0 0 2 -2l1 -12"/><path d="M9 7v-3a1 1 0 0 1 1 -1h4a1 1 0 0 1 1 1v3"/></svg>
<div class="rowline" style="top:907px"></div>
<span id="t76" class="t " style="left:305.70px;top:930px;font-size:14px;line-height:17px;letter-spacing:0.400px;">10</span>
<span id="t77" class="t " style="left:386.20px;top:930px;font-size:14px;line-height:17px;letter-spacing:0.422px;">Accounting</span>
<span id="t78" class="t " style="left:554.90px;top:930px;font-size:14px;line-height:17px;letter-spacing:0.486px;">Customer</span>
<span id="t79" class="t " style="left:734.70px;top:930px;font-size:14px;line-height:17px;letter-spacing:0.359px;">Customer Updated by the Rajodiya infotech.</span>
<span id="t80" class="t " style="left:1501.50px;top:930px;font-size:14px;line-height:17px;letter-spacing:0.089px;">1 week ago</span>
<div class="delbtn" style="top:923px"></div>
<svg class="ic" style="left:1768.2px;top:931.1px;" width="14.5" height="14.5" viewBox="0 0 24 24" fill="none" stroke="#fff" stroke-width="2" stroke-linecap="round" stroke-linejoin="round"><path d="M4 7l16 0"/><path d="M10 11l0 6"/><path d="M14 11l0 6"/><path d="M5 7l1 12a2 2 0 0 0 2 2h8a2 2 0 0 0 2 -2l1 -12"/><path d="M9 7v-3a1 1 0 0 1 1 -1h4a1 1 0 0 1 1 1v3"/></svg>
<div class="abs" style="left:1390px;top:183px;width:370.7px;height:362px;background:#fff;border:1px solid #6f6f6f;box-shadow:0 5px 18px rgba(0,0,0,.28)"></div>
<span id="t81" class="t " style="left:1406.70px;top:186px;font-size:14px;line-height:17px;letter-spacing:0.385px;">User Management</span>
<span id="t82" class="t " style="left:1406.70px;top:206px;font-size:14px;line-height:17px;letter-spacing:0.225px;">Product &amp; Service</span>
<span id="t83" class="t " style="left:1406.70px;top:226px;font-size:14px;line-height:17px;letter-spacing:0.514px;">Proposal</span>
<span id="t84" class="t " style="left:1406.70px;top:246px;font-size:14px;line-height:17px;letter-spacing:0.243px;">Retainer</span>
<span id="t85" class="t " style="left:1407.30px;top:266px;font-size:14px;line-height:17px;letter-spacing:0.200px;">Invoice</span>
<span id="t86" class="t " style="left:1406.70px;top:286px;font-size:14px;line-height:17px;letter-spacing:0.329px;">Projects</span>
<div class="opt" style="top:304px;background:#e8532a"></div>
<span id="t87" class="t " style="left:1407.50px;top:306px;font-size:14px;line-height:17px;color:#fff;letter-spacing:0.433px;">Accounting</span>
<span id="t88" class="t " style="left:1406.70px;top:326px;font-size:14px;line-height:17px;">HRM</span>
<span id="t89" class="t " style="left:1406.70px;top:346px;font-size:14px;line-height:17px;letter-spacing:-0.650px;">CRM</span>
<span id="t90" class="t " style="left:1406.70px;top:366px;font-size:14px;line-height:17px;letter-spacing:-1.150px;">POS</span>
<span id="t91" class="t " style="left:1406.70px;top:386px;font-size:14px;line-height:17px;letter-spacing:-0.250px;">Sales</span>
<span id="t92" class="t " style="left:1406.70px;top:406px;font-size:14px;line-height:17px;">Rotas</span>
<span id="t93" class="t " style="left:1406.70px;top:426px;font-size:14px;line-height:17px;letter-spacing:0.414px;">Contract</span>
<span id="t94" class="t " style="left:1407.50px;top:446px;font-size:14px;line-height:17px;letter-spacing:-0.200px;">Assets</span>
<span id="t95" class="t " style="left:1407.50px;top:466px;font-size:14px;line-height:17px;letter-spacing:0.491px;">Zoom Meeting</span>
<span id="t96" class="t " style="left:1406.70px;top:486px;font-size:14px;line-height:17px;letter-spacing:0.550px;">Notes</span>
<span id="t97" class="t " style="left:1406.70px;top:506px;font-size:14px;line-height:17px;letter-spacing:0.323px;">Support Ticket</span>
<span id="t98" class="t " style="left:1407.50px;top:526px;font-size:14px;line-height:17px;letter-spacing:0.680px;">Appointment</span>
</main>
</body></html>
